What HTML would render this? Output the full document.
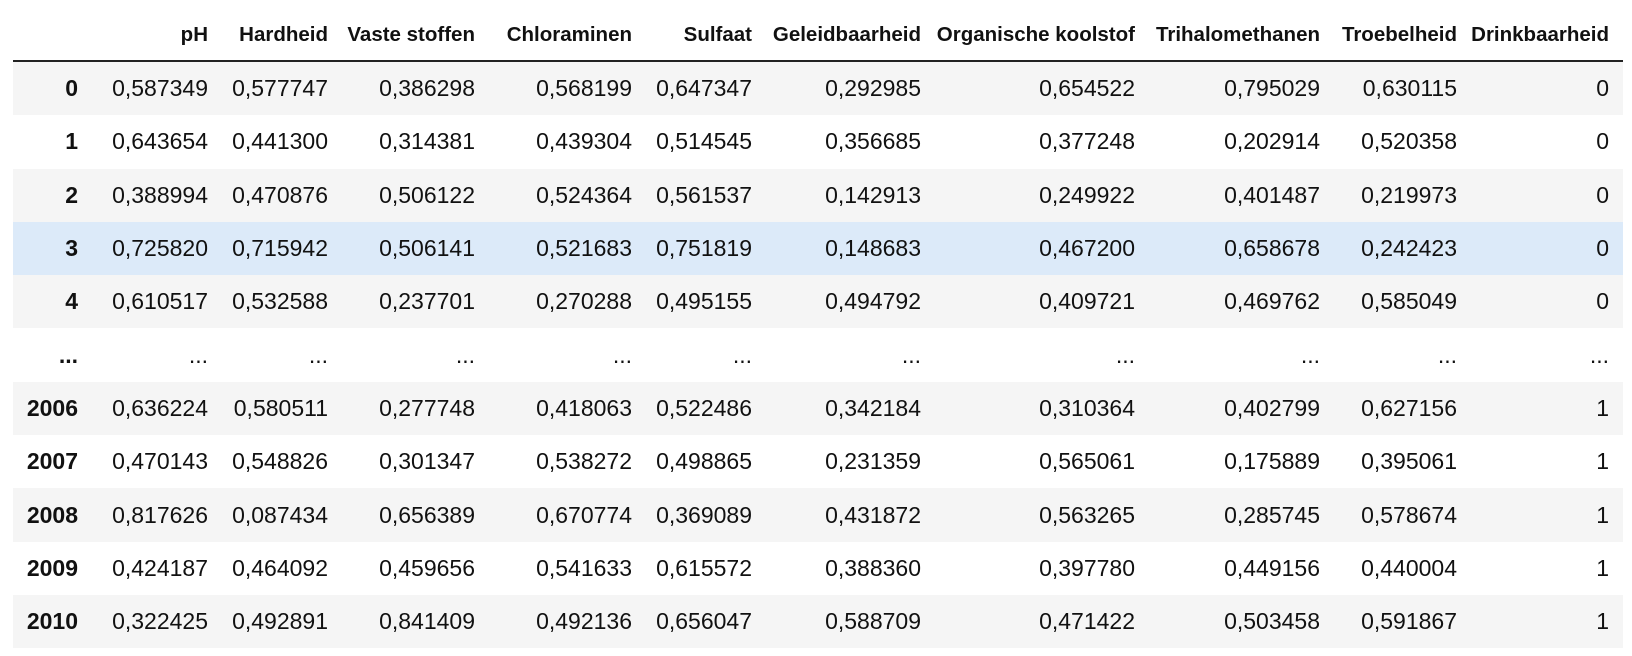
<!DOCTYPE html>
<html><head><meta charset="utf-8"><style>
html,body{margin:0;background:#fff;width:1632px;height:656px;overflow:hidden}
table{position:absolute;left:13px;top:0;border-collapse:collapse;table-layout:fixed;width:1610px;font-family:"Liberation Sans",Arial,sans-serif;font-size:23px;color:#111}
td,th{padding:0;text-align:right;white-space:nowrap;overflow:visible}
thead th{height:47px;border-bottom:2px solid #222;font-weight:bold;vertical-align:bottom;padding-bottom:13px;font-size:20.5px}
tbody td{height:53.3px}
tbody th{font-weight:bold}
tr.g{background:#f5f5f5}
tr.h{background:#dceaf9}
</style></head><body>
<table>
<colgroup><col style="width:65px"><col style="width:130px"><col style="width:120px"><col style="width:147px"><col style="width:157px"><col style="width:120px"><col style="width:169px"><col style="width:214px"><col style="width:185px"><col style="width:137px"><col style="width:152px"><col style="width:14px"></colgroup>
<thead><tr><th></th><th>pH</th><th>Hardheid</th><th>Vaste stoffen</th><th>Chloraminen</th><th>Sulfaat</th><th>Geleidbaarheid</th><th>Organische koolstof</th><th>Trihalomethanen</th><th>Troebelheid</th><th>Drinkbaarheid</th><th></th></tr></thead>
<tbody>
<tr class="g"><th>0</th><td>0,587349</td><td>0,577747</td><td>0,386298</td><td>0,568199</td><td>0,647347</td><td>0,292985</td><td>0,654522</td><td>0,795029</td><td>0,630115</td><td>0</td><td></td></tr>
<tr><th>1</th><td>0,643654</td><td>0,441300</td><td>0,314381</td><td>0,439304</td><td>0,514545</td><td>0,356685</td><td>0,377248</td><td>0,202914</td><td>0,520358</td><td>0</td><td></td></tr>
<tr class="g"><th>2</th><td>0,388994</td><td>0,470876</td><td>0,506122</td><td>0,524364</td><td>0,561537</td><td>0,142913</td><td>0,249922</td><td>0,401487</td><td>0,219973</td><td>0</td><td></td></tr>
<tr class="h"><th>3</th><td>0,725820</td><td>0,715942</td><td>0,506141</td><td>0,521683</td><td>0,751819</td><td>0,148683</td><td>0,467200</td><td>0,658678</td><td>0,242423</td><td>0</td><td></td></tr>
<tr class="g"><th>4</th><td>0,610517</td><td>0,532588</td><td>0,237701</td><td>0,270288</td><td>0,495155</td><td>0,494792</td><td>0,409721</td><td>0,469762</td><td>0,585049</td><td>0</td><td></td></tr>
<tr><th>...</th><td>...</td><td>...</td><td>...</td><td>...</td><td>...</td><td>...</td><td>...</td><td>...</td><td>...</td><td>...</td><td></td></tr>
<tr class="g"><th>2006</th><td>0,636224</td><td>0,580511</td><td>0,277748</td><td>0,418063</td><td>0,522486</td><td>0,342184</td><td>0,310364</td><td>0,402799</td><td>0,627156</td><td>1</td><td></td></tr>
<tr><th>2007</th><td>0,470143</td><td>0,548826</td><td>0,301347</td><td>0,538272</td><td>0,498865</td><td>0,231359</td><td>0,565061</td><td>0,175889</td><td>0,395061</td><td>1</td><td></td></tr>
<tr class="g"><th>2008</th><td>0,817626</td><td>0,087434</td><td>0,656389</td><td>0,670774</td><td>0,369089</td><td>0,431872</td><td>0,563265</td><td>0,285745</td><td>0,578674</td><td>1</td><td></td></tr>
<tr><th>2009</th><td>0,424187</td><td>0,464092</td><td>0,459656</td><td>0,541633</td><td>0,615572</td><td>0,388360</td><td>0,397780</td><td>0,449156</td><td>0,440004</td><td>1</td><td></td></tr>
<tr class="g"><th>2010</th><td>0,322425</td><td>0,492891</td><td>0,841409</td><td>0,492136</td><td>0,656047</td><td>0,588709</td><td>0,471422</td><td>0,503458</td><td>0,591867</td><td>1</td><td></td></tr>
</tbody></table>
</body></html>
